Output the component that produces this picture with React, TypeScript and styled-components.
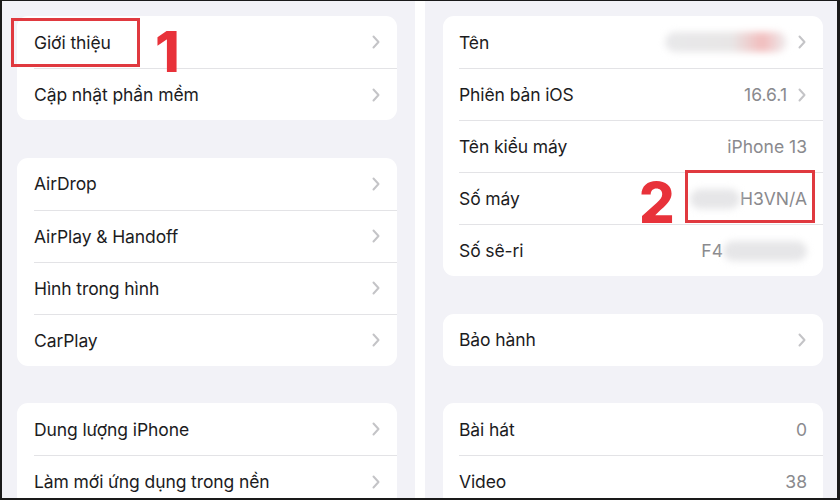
import React from "react";
import styled, { createGlobalStyle } from "styled-components";

const Global = createGlobalStyle`
  html, body { margin: 0; padding: 0; background: #fff; }
  body { font-family: Inter, "Noto Sans", sans-serif; -webkit-font-smoothing: antialiased; }
`;

const Frame = styled.div`
  position: relative;
  width: 840px;
  height: 500px;
  box-sizing: border-box;
  border-top: 1px solid #1a1a1a;
  border-left: 2px solid #1a1a1a;
  border-right: 3px solid #1a1a1a;
  border-bottom: 2px solid #1a1a1a;
  display: flex;
  background: #fff;
  overflow: hidden;
`;

const Panel = styled.div<{ $pl: number; $pr: number; $w: number }>`
  width: ${(p) => p.$w}px;
  flex-shrink: 0;
  box-sizing: border-box;
  background: #f2f2f7;
  padding: 15px ${(p) => p.$pr}px 0 ${(p) => p.$pl}px;
  display: flex;
  flex-direction: column;
  gap: 37.5px;
  overflow: hidden;
`;

const Gap = styled.div`
  width: 10px;
  flex-shrink: 0;
  background: #fff;
`;

const Card = styled.div`
  background: #fff;
  border-radius: 11px;
  flex-shrink: 0;
  overflow: hidden;
`;

const Row = styled.div<{ $pl: number }>`
  height: 52px;
  display: flex;
  align-items: center;
  margin-left: ${(p) => p.$pl}px;
  padding-right: 16px;
  position: relative;
  & + & {
    border-top: 1px solid #e3e3e6;
    height: 51px;
  }
`;

const Label = styled.span`
  flex: 1;
  font-size: 17.5px;
  color: #1c1c1e;
  letter-spacing: -0.1px;
  white-space: nowrap;
`;

const Value = styled.span`
  font-size: 17.5px;
  color: #8a8a8e;
  white-space: nowrap;
  display: flex;
  align-items: center;
`;

const ChevronWrap = styled.span`
  display: inline-flex;
  margin-left: 10px;
  width: 10px;
  justify-content: center;
`;

const Blur = styled.span<{ $w: number; $tint?: boolean }>`
  display: inline-block;
  width: ${(p) => p.$w}px;
  height: 20px;
  border-radius: 10px;
  background: ${(p) =>
    p.$tint
      ? "linear-gradient(90deg, #e8e8ea 0%, #e8e6e6 55%, #f2bcbc 80%, #eeeef0 100%)"
      : "#e6e6e8"};
  filter: blur(3.5px);
`;

const Mark = styled.div<{ $x: number; $y: number; $w: number; $h: number }>`
  position: absolute;
  left: ${(p) => p.$x}px;
  top: ${(p) => p.$y}px;
  width: ${(p) => p.$w}px;
  height: ${(p) => p.$h}px;
  box-sizing: border-box;
  border: 3px solid #e0393f;
`;

const Num = styled.div<{ $x: number; $y: number }>`
  position: absolute;
  left: ${(p) => p.$x}px;
  top: ${(p) => p.$y}px;
  font-family: Inter, "Noto Sans", sans-serif;
  font-weight: 800;
  font-size: 56px;
  line-height: 1;
  color: #e8323a;
`;

const Chevron = () => (
  <ChevronWrap>
    <svg width="8" height="14" viewBox="0 0 8 14">
      <polyline points="1.5,1.5 6.5,7 1.5,12.5" fill="none" stroke="#c4c4c7" strokeWidth="2" strokeLinecap="round" strokeLinejoin="round" />
    </svg>
  </ChevronWrap>
);

type Item = { label: string; value?: React.ReactNode; chevron?: boolean };

const Group = ({ items, pl }: { items: Item[]; pl: number }) => (
  <Card>
    {items.map((it, i) => (
      <Row key={i} $pl={pl}>
        <Label>{it.label}</Label>
        {it.value !== undefined && <Value>{it.value}</Value>}
        {it.chevron && <Chevron />}
      </Row>
    ))}
  </Card>
);

export default function App() {
  return (
    <>
      <Global />
      <Frame>
        <Panel $w={413} $pl={15} $pr={18}>
          <Group pl={17} items={[{ label: "Giới thiệu", chevron: true }, { label: "Cập nhật phần mềm", chevron: true }]} />
          <Group
            pl={17}
            items={[
              { label: "AirDrop", chevron: true },
              { label: "AirPlay & Handoff", chevron: true },
              { label: "Hình trong hình", chevron: true },
              { label: "CarPlay", chevron: true },
            ]}
          />
          <Group
            pl={17}
            items={[
              { label: "Dung lượng iPhone", chevron: true },
              { label: "Làm mới ứng dụng trong nền", chevron: true },
            ]}
          />
        </Panel>
        <Gap />
        <Panel $w={412} $pl={18} $pr={14}>
          <Group
            pl={16}
            items={[
              { label: "Tên", value: <Blur $w={122} $tint />, chevron: true },
              { label: "Phiên bản iOS", value: "16.6.1", chevron: true },
              { label: "Tên kiểu máy", value: "iPhone 13" },
              { label: "Số máy", value: <><Blur $w={50} />H3VN/A</> },
              { label: "Số sê-ri", value: <>F4<Blur $w={84} /></> },
            ]}
          />
          <Group pl={16} items={[{ label: "Bảo hành", chevron: true }]} />
          <Group
            pl={16}
            items={[
              { label: "Bài hát", value: "0" },
              { label: "Video", value: "38" },
            ]}
          />
        </Panel>
        <Mark $x={9} $y={17} $w={129} $h={49} />
        <Num $x={153} $y={23}>1</Num>
        <Mark $x={683} $y={169} $w={130} $h={53} />
        <Num $x={637} $y={174}>2</Num>
      </Frame>
    </>
  );
}
